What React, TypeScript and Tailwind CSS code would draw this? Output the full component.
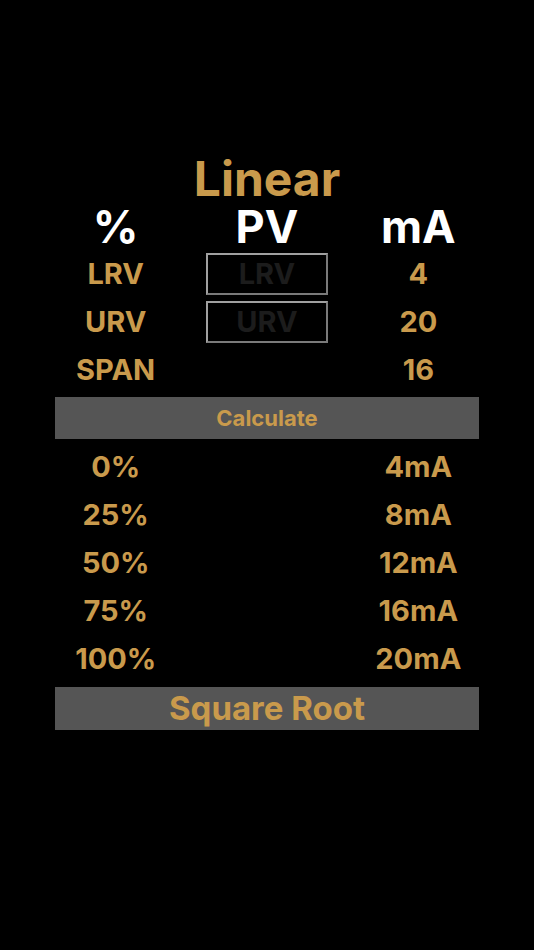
import React from 'react';

const GOLD = 'text-[#c99a4c]';

const rows = [
  { pct: '0%', ma: '4mA' },
  { pct: '25%', ma: '8mA' },
  { pct: '50%', ma: '12mA' },
  { pct: '75%', ma: '16mA' },
  { pct: '100%', ma: '20mA' },
];

const PvInput: React.FC<{ placeholder: string }> = ({ placeholder }) => (
  <input
    placeholder={placeholder}
    className="w-[122px] h-[42px] bg-black border-2 border-t-[#a0a0a0] border-l-[#a0a0a0] border-r-[#7a7a7a] border-b-[#7a7a7a] text-center text-[29px] font-bold text-[#1c1c1c] placeholder:text-[#1c1c1c] outline-none"
  />
);

const App: React.FC = () => {
  return (
    <div className="min-h-screen w-full bg-black pt-[158px] font-['Inter',sans-serif] font-bold">
      <h1 className={`mb-[4px] text-center text-[48px] leading-[42px] font-bold ${GOLD}`}>Linear</h1>

      <div className="grid grid-cols-3 px-[40px] text-[45px] leading-[46px] text-white text-center">
        <span>%</span>
        <span>PV</span>
        <span>mA</span>
      </div>

      <div className={`grid grid-cols-3 px-[40px] text-[29px] text-center ${GOLD}`}>
        <div className="h-[48px] flex items-center justify-center">LRV</div>
        <div className="h-[48px] flex items-center justify-center"><PvInput placeholder="LRV" /></div>
        <div className="h-[48px] flex items-center justify-center">4</div>

        <div className="h-[48px] flex items-center justify-center">URV</div>
        <div className="h-[48px] flex items-center justify-center"><PvInput placeholder="URV" /></div>
        <div className="h-[48px] flex items-center justify-center">20</div>

        <div className="h-[48px] flex items-center justify-center">SPAN</div>
        <div className="h-[48px]" />
        <div className="h-[48px] flex items-center justify-center">16</div>
      </div>

      <button className={`block mt-[3px] mx-[55px] w-[424px] h-[42px] bg-[#555555] text-[22px] ${GOLD}`}>
        Calculate
      </button>

      <div className={`mt-[4px] grid grid-cols-3 px-[40px] text-[29px] text-center ${GOLD}`}>
        {rows.map((r) => (
          <React.Fragment key={r.pct}>
            <div className="h-[48px] flex items-center justify-center">{r.pct}</div>
            <div className="h-[48px]" />
            <div className="h-[48px] flex items-center justify-center">{r.ma}</div>
          </React.Fragment>
        ))}
      </div>

      <button className={`block mt-[4px] mx-[55px] w-[424px] h-[43px] bg-[#555555] text-[33px] leading-[43px] ${GOLD}`}>
        Square Root
      </button>
    </div>
  );
};

export default App;
